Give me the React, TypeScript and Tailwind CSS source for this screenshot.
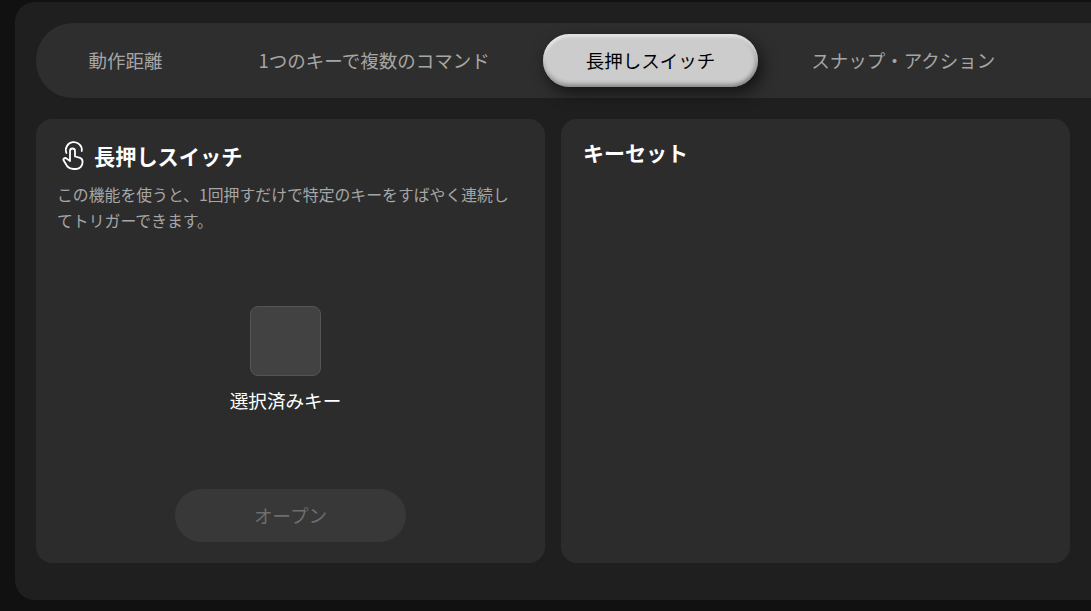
const font = {
  fontFamily: '"Noto Sans CJK JP", "Noto Sans", sans-serif',
};

const tabs = [
  { label: "動作距離", active: false },
  { label: "1つのキーで複数のコマンド", active: false },
  { label: "長押しスイッチ", active: true },
  { label: "スナップ・アクション", active: false },
];

function HoldIcon() {
  return (
    <svg
      width="28"
      height="32"
      viewBox="0 0 28 32"
      fill="none"
      stroke="white"
      strokeWidth="1.8"
      strokeLinecap="round"
      strokeLinejoin="round"
      className="ml-[2px] shrink-0"
    >
      <path d="M6.4 13A8 8 0 1 1 21.8 11" />
      <path d="M10 21V11a2.5 2.5 0 0 1 5 0v5.5l4.4 1.2c1.8 .5 3.2 2 3.2 4 0 4-2.6 7.3-6.4 7.3h-2.8c-3 0-4.5-1-6-2.5L4 21a1.7 1.7 0 0 1 2.5-2.5L10 21" />
    </svg>
  );
}

export default function App() {
  return (
    <div
      style={font}
      className="h-[611px] w-[1091px] overflow-hidden bg-[#111111] pl-[15px] pt-[2px]"
    >
      <div className="h-[598px] w-[1100px] rounded-l-[20px] bg-[#1f1f1f] pl-[21px] pt-[21px]">
        <div className="flex h-[75px] w-[1079px] gap-[9px] rounded-l-[37px] bg-[#2e2e2e] pl-[9px] pt-[11px]">
          {tabs.map((tab) => (
            <div
              key={tab.label}
              className={
                tab.active
                  ? "mx-[1px] flex h-[53px] items-center whitespace-nowrap rounded-[27px] bg-[#cccccc] px-[42.5px] text-[18.5px] text-black shadow-[inset_0_3px_3px_rgba(255,255,255,0.55),inset_0_-3px_4px_rgba(0,0,0,0.3),inset_-3px_0_4px_rgba(0,0,0,0.15),inset_3px_0_4px_rgba(255,255,255,0.2),4px_6px_16px_rgba(0,0,0,0.6)]"
                  : "flex h-[53px] items-center whitespace-nowrap px-[43.5px] text-[18.5px] text-[#a6a6a6]"
              }
            >
              {tab.label}
            </div>
          ))}
        </div>

        <div className="mt-[21px] flex gap-[16px]">
          <div className="flex h-[444px] w-[509px] flex-col rounded-[16px] bg-[#2c2c2c] pl-[22px] pr-[30px] pt-[20px]">
            <div className="flex h-[34px] items-center gap-[6px]">
              <HoldIcon />
              <h2 className="text-[21.2px] font-bold text-white">長押しスイッチ</h2>
            </div>
            <p className="-ml-[1px] mt-[9px] text-[15.85px] leading-[26px] text-[#a6a6a6]">
              この機能を使うと、1回押すだけで特定のキーをすばやく連続してトリガーできます。
            </p>
            <div className="mr-[2px] mt-[72px] flex flex-col items-center">
              <div className="h-[70px] w-[71px] rounded-[8px] border border-[#555555] bg-[#424242]" />
              <p className="mt-[11px] text-[18.6px] leading-[26px] text-white">選択済みキー</p>
            </div>
            <button className="ml-[117px] mt-[76px] flex h-[53px] w-[231px] items-center justify-center rounded-[27px] bg-[#383838] text-[18.5px] text-[#6e6e6e]">
              オープン
            </button>
          </div>

          <div className="h-[444px] w-[509px] rounded-[16px] bg-[#2c2c2c] pl-[22px] pt-[16px]">
            <h2 className="text-[21px] font-bold leading-[34px] text-white">キーセット</h2>
          </div>
        </div>
      </div>
    </div>
  );
}
